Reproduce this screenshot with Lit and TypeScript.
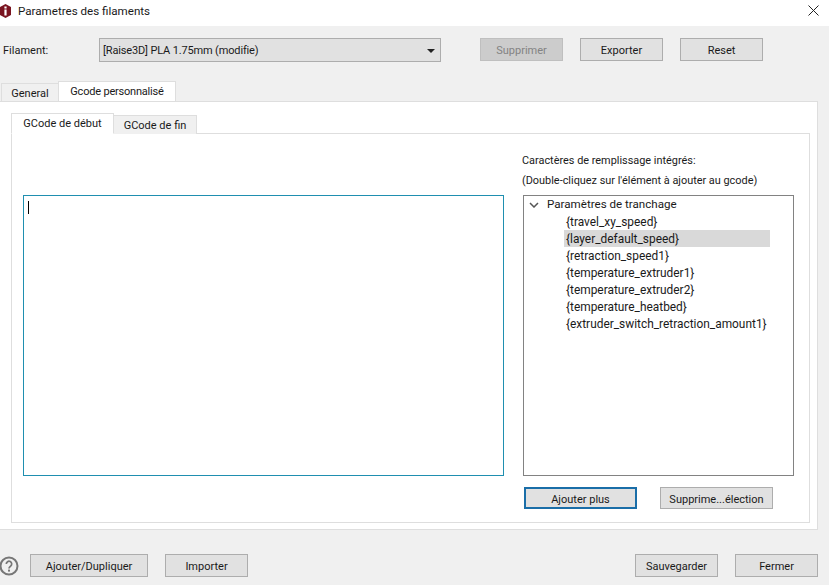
import { LitElement, html, css } from "lit";
import { customElement } from "lit/decorators.js";

const ITEMS = [
  "{travel_xy_speed}",
  "{layer_default_speed}",
  "{retraction_speed1}",
  "{temperature_extruder1}",
  "{temperature_extruder2}",
  "{temperature_heatbed}",
  "{extruder_switch_retraction_amount1}",
];

@customElement("app-root")
export class AppRoot extends LitElement {
  static styles = css`
    :host {
      display: flex;
      flex-direction: column;
      width: 829px;
      height: 585px;
      overflow: hidden;
      background: #f0f0f0;
      color: #1a1a1a;
      font-family: Roboto, "Noto Sans", sans-serif;
      font-size: 11px;
      line-height: 17px;
      box-sizing: border-box;
    }
    * { box-sizing: border-box; }
    .titlebar {
      flex: none;
      height: 26px;
      background: #fff;
      display: flex;
      align-items: center;
      gap: 6px;
      padding: 0 10px 5px 0;
      font-size: 11.6px;
    }
    .logo { margin-left: -1px; flex: none; }
    .title-text { flex: 1; padding-top: 1px; }
    .toolbar {
      flex: none;
      height: 55px;
      display: flex;
      align-items: flex-start;
      padding: 12px 0 0 3px;
    }
    .toolbar label { width: 96px; line-height: 24px; padding-top: 1px; }
    .combo {
      width: 342px;
      height: 24px;
      background: #e1e1e1;
      border: 1px solid #adadad;
      display: flex;
      align-items: center;
      justify-content: space-between;
      padding: 1px 5px 0 3px;
      margin-right: 39px;
      letter-spacing: -0.15px;
    }
    .caret {
      width: 0;
      height: 0;
      border-left: 4px solid transparent;
      border-right: 4px solid transparent;
      border-top: 4px solid #222;
    }
    .btn {
      width: 83px;
      height: 23px;
      flex: none;
      background: #e1e1e1;
      border: 1px solid #adadad;
      display: flex;
      align-items: center;
      justify-content: center;
      color: #1a1a1a;
      padding-top: 2px;
    }
    .btn.disabled { background: #cccccc; border-color: #bfbfbf; color: #838383; }
    .btn.wide { width: 118px; }
    .btn.mid { width: 113px; height: 22px; }
    .btn.focus { border: 2px solid #1a6ea8; }
    .toolbar .btn + .btn { margin-left: 17px; }
    .tabs { flex: none; display: flex; align-items: flex-end; }
    .outer-tabs { height: 20px; padding-left: 1px; }
    .tab {
      background: #f0f0f0;
      border: 1px solid #dedede;
      border-bottom: none;
      display: flex;
      align-items: center;
      justify-content: center;
    }
    .tab.active { background: #fff; }
    .outer-tabs .tab { width: 58px; height: 18px; padding-top: 2px; }
    .outer-tabs .tab.active {
      width: 118px;
      height: 20px;
      margin-left: -1px;
      padding: 0 0 1px 0;
      letter-spacing: -0.2px;
    }
    .panel {
      flex: none;
      height: 429px;
      margin-right: 11px;
      background: #fff;
      border: 1px solid #dedede;
      border-left: none;
      padding: 11px 7px 6px 11px;
      display: flex;
      flex-direction: column;
    }
    .inner-tabs { height: 21px; position: relative; z-index: 1; margin-bottom: -1px; }
    .inner-tabs .tab.active { width: 103px; height: 21px; padding-bottom: 0; border-bottom: 1px solid #fff; }
    .inner-tabs .tab.off { width: 83px; height: 19px; margin-left: 0; border-left: none; }
    .inner {
      flex: 1;
      border: 1px solid #dedede;
      display: grid;
      grid-template-columns: 481px 271px;
      column-gap: 19px;
      padding: 18px 0 0 11px;
      align-content: start;
    }
    .editor {
      margin-top: 43px;
      height: 281px;
      border: 1px solid #1f8fb0;
      padding: 5px 4px;
    }
    .cursor { width: 1px; height: 13px; background: #000; }
    .side { display: flex; flex-direction: column; }
    .hint { line-height: 18px; margin-left: -1px; height: 20px; font-size: 10.9px; }
    .hints { height: 43px; }
    .tree {
      height: 281px;
      border: 1px solid #828282;
      padding: 0;
      font-size: 11.9px;
    }
    .root {
      height: 17px;
      display: flex;
      align-items: center;
      gap: 8px;
      padding-left: 5px;
      font-size: 11.6px;
    }
    .item {
      height: 17px;
      width: 206px;
      margin-left: 40px;
      padding: 1px 0 0 2px;
      white-space: nowrap;
    }
    .item.sel { background: #d9d9d9; }
    .tree-actions {
      display: flex;
      gap: 23px;
      margin-top: 11px;
      padding-left: 1px;
    }
    .footer {
      flex: 1;
      display: flex;
      align-items: flex-start;
      padding: 24px 11px 0 0;
    }
    .help { width: 20px; height: 20px; margin: 2px 11px 0 -1px; flex: none; }
    .footer .gap16 { margin-left: 17px; }
    .spacer { flex: 1; }
  `;

  render() {
    return html`
      <div class="titlebar">
        <svg class="logo" width="13" height="16" viewBox="0 0 13 16">
          <path d="M6.5 1 L12 4 V12 L6.5 15 L1 12 V4 Z" fill="#7a1420"/>
          <rect x="5.4" y="3.5" width="2.2" height="2" fill="#fff"/>
          <rect x="5.4" y="6.5" width="2.2" height="6" fill="#fff"/>
        </svg>
        <span class="title-text">Parametres des filaments</span>
        <svg width="11" height="11" viewBox="0 0 11 11">
          <path d="M.5.5l10 10M10.5.5l-10 10" stroke="#222" fill="none"/>
        </svg>
      </div>
      <div class="toolbar">
        <label>Filament:</label>
        <div class="combo"><span>[Raise3D] PLA 1.75mm (modifie)</span><span class="caret"></span></div>
        <div class="btn disabled">Supprimer</div>
        <div class="btn">Exporter</div>
        <div class="btn">Reset</div>
      </div>
      <div class="tabs outer-tabs">
        <div class="tab">General</div>
        <div class="tab active">Gcode personnalisé</div>
      </div>
      <div class="panel">
        <div class="tabs inner-tabs">
          <div class="tab active">GCode de début</div>
          <div class="tab off">GCode de fin</div>
        </div>
        <div class="inner">
          <div class="editor"><div class="cursor"></div></div>
          <div class="side">
            <div class="hints">
              <div class="hint">Caractères de remplissage intégrés:</div>
              <div class="hint">(Double-cliquez sur l'élément à ajouter au gcode)</div>
            </div>
            <div class="tree">
              <div class="root">
                <svg width="10" height="6" viewBox="0 0 10 6"><path d="M1 1l4 4 4-4" stroke="#555" stroke-width="1.5" fill="none"/></svg>
                <span>Paramètres de tranchage</span>
              </div>
              ${ITEMS.map((t, i) => html`<div class="item ${i === 1 ? "sel" : ""}">${t}</div>`)}
            </div>
            <div class="tree-actions">
              <div class="btn mid focus">Ajouter plus</div>
              <div class="btn mid">Supprime...élection</div>
            </div>
          </div>
        </div>
      </div>
      <div class="footer">
        <svg class="help" viewBox="0 0 20 20">
          <circle cx="10" cy="10" r="8.5" fill="none" stroke="#777" stroke-width="2"/>
          <path d="M7.3 8a2.7 2.7 0 1 1 4.2 2.2c-1 .7-1.5 1.2-1.5 2.3" fill="none" stroke="#777" stroke-width="1.7"/>
          <rect x="9" y="13.6" width="2" height="2" fill="#777"/>
        </svg>
        <div class="btn wide">Ajouter/Dupliquer</div>
        <div class="btn gap16">Importer</div>
        <div class="spacer"></div>
        <div class="btn">Sauvegarder</div>
        <div class="btn gap16">Fermer</div>
      </div>
    `;
  }
}
